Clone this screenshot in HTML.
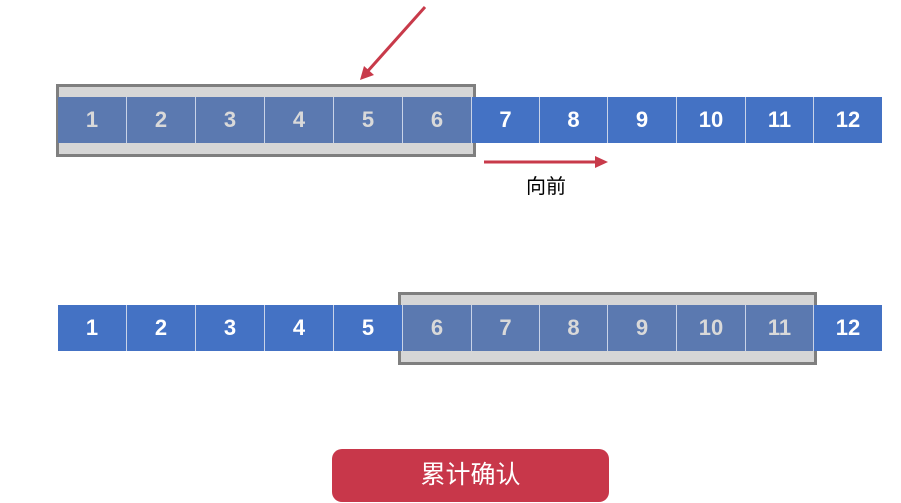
<!DOCTYPE html>
<html><head><meta charset="utf-8"><style>
body{margin:0;width:901px;height:503px;background:#fff;position:relative;overflow:hidden;font-family:"Liberation Sans","Noto Sans CJK SC",sans-serif}
.c{position:absolute;height:46px;background:#4472c4;color:#fff;font-weight:bold;font-size:22px;line-height:46px;text-align:center;box-sizing:border-box;border-right:1px solid #c9d3e8}
.c.in{background:#5b79b0;color:#d9d9d9}
.box{position:absolute;border:3px solid #7f7f7f;background:#d6d6d6;box-sizing:border-box}
.btn{position:absolute;left:332px;top:449px;width:277px;height:53px;background:#c8374a;border-radius:10px;color:#fff;font-size:25px;text-align:center;line-height:53px}
</style></head><body>
<div class="box" style="left:56px;top:84px;width:420px;height:73px"></div>
<div class="box" style="left:398px;top:292px;width:419px;height:73px"></div>
<script>
var xs=[58,127,196,265,334,403,472,540,608,677,746,814,882];
function row(y,a,b){for(var i=0;i<12;i++){var d=document.createElement('div');d.className='c'+(i>=a&&i<=b?' in':'');d.style.left=xs[i]+'px';d.style.top=y+'px';d.style.width=(xs[i+1]-xs[i])+'px';if(i==11)d.style.borderRight='none';d.textContent=i+1;document.body.appendChild(d);}}
row(97,0,5);row(305,5,10);
</script>
<svg style="position:absolute;left:0;top:0" width="901" height="503">
<line x1="425" y1="7" x2="367" y2="72" stroke="#c83a4a" stroke-width="3"/>
<polygon points="360,80 364,66 374,75" fill="#c83a4a"/>
<line x1="484" y1="162" x2="597" y2="162" stroke="#c83a4a" stroke-width="3"/>
<polygon points="608,162 595,156 595,168" fill="#c83a4a"/>
</svg>
<div style="position:absolute;left:526px;top:170px;font-size:20px;color:#000">向前</div>
<div class="btn">累计确认</div>
</body></html>
